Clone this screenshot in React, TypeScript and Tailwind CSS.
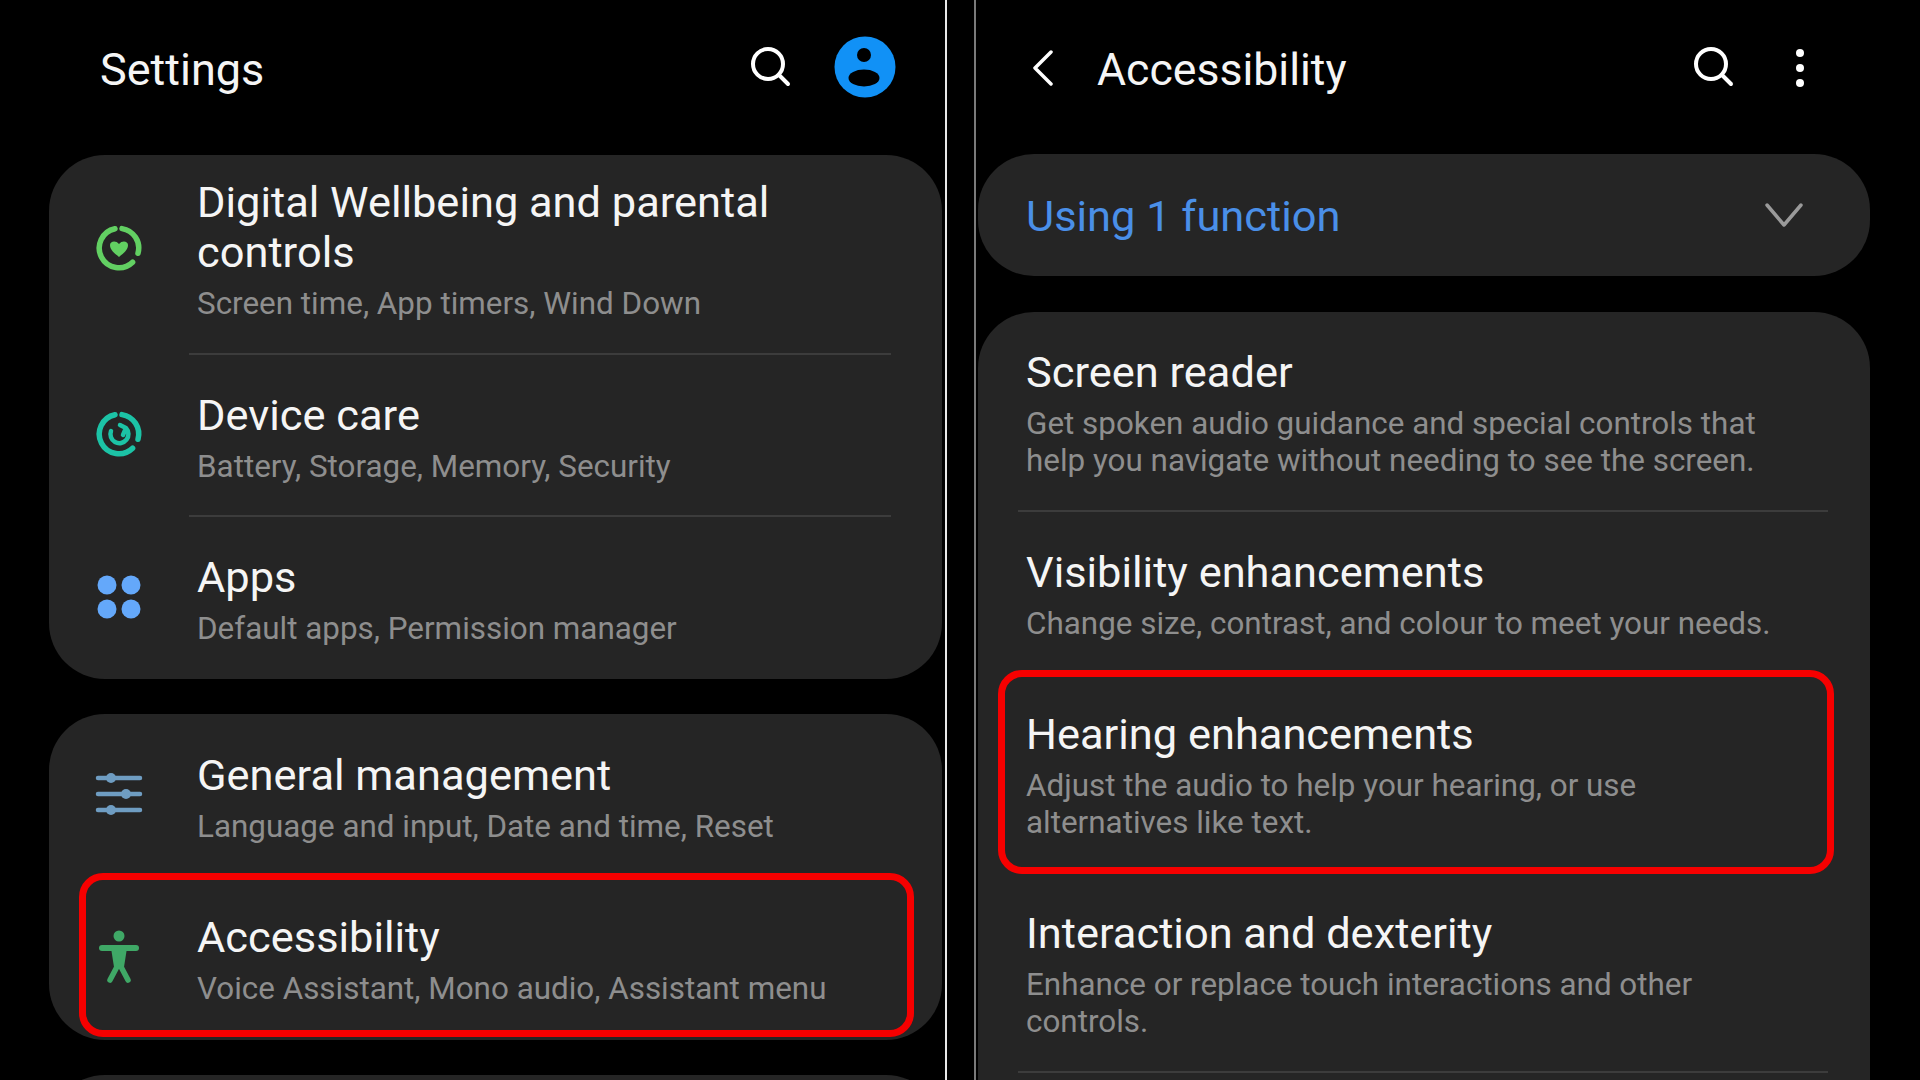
import React from "react";

function Ring({ color, children }: { color: string; children: React.ReactNode }) {
  return (
    <svg width="50" height="50" viewBox="-25 -25 50 50" fill="none">
      <g stroke={color} strokeWidth="5.5" strokeLinecap="round">
        <path d="M -4 -19.3 A 19.7 19.7 0 1 0 13.6 14.2" />
        <path d="M 3 -19.4 A 19.7 19.7 0 0 1 19 5.3" />
      </g>
      {children}
    </svg>
  );
}

function SearchIcon() {
  return (
    <svg width="42" height="42" viewBox="0 0 42 42" fill="none" stroke="#fff" strokeWidth="4" strokeLinecap="round">
      <circle cx="18" cy="18" r="15" />
      <path d="M29 29 L38 38" />
    </svg>
  );
}

function Avatar() {
  return (
    <svg width="62" height="62" viewBox="0 0 62 62">
      <circle cx="31" cy="31" r="30.5" fill="#1191f6" />
      <circle cx="30" cy="19" r="7" fill="#000" />
      <ellipse cx="30" cy="42" rx="15.5" ry="8.5" fill="#000" />
    </svg>
  );
}

const icons: Record<string, React.ReactNode> = {
  wellbeing: (
    <Ring color="#62d062">
      <path d="M0 9 C-3 6 -9 3 -9 -3 C-9 -7 -3 -8 0 -4 C3 -8 9 -7 9 -3 C9 3 3 6 0 9 Z" fill="#62d062" />
    </Ring>
  ),
  care: (
    <Ring color="#1cc3a6">
      <path d="M-8 -3 A 9 9 0 1 0 7 -6 L1 -9 M7 -6 L4 1" stroke="#1cc3a6" strokeWidth="4.5" strokeLinecap="round" fill="none" />
    </Ring>
  ),
  apps: (
    <svg width="50" height="50" viewBox="0 0 50 50" fill="#64a8fa">
      <circle cx="13" cy="13" r="9.5" />
      <circle cx="37" cy="13" r="9.5" />
      <circle cx="13" cy="37" r="9.5" />
      <circle cx="37" cy="37" r="9.5" />
    </svg>
  ),
  general: (
    <svg width="50" height="50" viewBox="0 0 50 50" fill="#6f9dc2" stroke="#6f9dc2">
      <path d="M4 9 H46 M4 25 H46 M4 41 H46" strokeWidth="4.5" strokeLinecap="round" />
      <circle cx="17" cy="9" r="5" stroke="none" />
      <circle cx="32" cy="25" r="5" stroke="none" />
      <circle cx="17" cy="41" r="5" stroke="none" />
    </svg>
  ),
  access: (
    <svg width="50" height="56" viewBox="0 0 50 56" fill="none">
      <circle cx="25" cy="7" r="5.5" fill="#3fa866" />
      <path d="M8 19 H42" stroke="#3fa866" strokeWidth="6" strokeLinecap="round" />
      <path d="M25 34 L16 51 M25 34 L34 51" stroke="#3fa866" strokeWidth="5.5" strokeLinecap="round" />
      <path d="M17 19 H33 L30 38 H20 Z" fill="#3fa866" />
    </svg>
  ),
};

function Row({
  icon,
  title,
  sub,
  divider,
  pad,
  highlight,
}: {
  icon?: string;
  title: string[];
  sub: string[];
  divider?: boolean;
  pad: string;
  highlight?: string;
}) {
  return (
    <div className={`relative flex ${pad}`}>
      {icon && <div className="w-[148px] shrink-0 flex items-center justify-center pr-[9px]">{icons[icon]}</div>}
      <div className={icon ? "" : "pl-[48px]"}>
        {title.map((t) => (
          <div key={t} className="text-[43.4px] leading-[50px] text-[#f5f5f5] whitespace-nowrap">
            {t}
          </div>
        ))}
        <div className="mt-[7px]">
          {sub.map((s) => (
            <div key={s} className="text-[31.4px] leading-[37px] text-[#8e8e8e] whitespace-nowrap">
              {s}
            </div>
          ))}
        </div>
      </div>
      {divider && (
        <div className={`absolute bottom-0 h-[2px] bg-[#3c3c3c] ${icon ? "left-[140px] right-[51px]" : "left-[40px] right-[42px]"}`} />
      )}
      {highlight && <div className={`absolute border-[7px] border-[#f60000] rounded-[24px] ${highlight}`} />}
    </div>
  );
}

export default function App() {
  return (
    <div className="flex h-screen w-full overflow-hidden bg-black [font-family:Roboto,sans-serif]">
      <div className="w-[945px] shrink-0 pl-[49px] pr-[3px]">
        <div className="h-[155px] flex items-start">
          <div className="pl-[51px] pt-[45px] text-[45px] leading-[50px] text-[#f5f5f5] grow">Settings</div>
          <div className="pt-[46px] mr-[42px]"><SearchIcon /></div>
          <div className="pt-[36px] mr-[46px]"><Avatar /></div>
        </div>
        <div className="rounded-[56px] bg-[#252525] mb-[35px]">
          <Row icon="wellbeing" title={["Digital Wellbeing and parental", "controls"]} sub={["Screen time, App timers, Wind Down"]} divider pad="pt-[23px] pb-[38px] h-[200px]" />
          <Row icon="care" title={["Device care"]} sub={["Battery, Storage, Memory, Security"]} divider pad="pt-[36px] pb-[40px] h-[162px]" />
          <Row icon="apps" title={["Apps"]} sub={["Default apps, Permission manager"]} pad="pt-[36px] pb-[38px] h-[162px]" />
        </div>
        <div className="rounded-[56px] bg-[#252525] mb-[35px]">
          <Row icon="general" title={["General management"]} sub={["Language and input, Date and time, Reset"]} pad="pt-[37px] pb-[39px] h-[162px]" />
          <Row icon="access" title={["Accessibility"]} sub={["Voice Assistant, Mono audio, Assistant menu"]} pad="pt-[37px] pb-[39px] h-[164px]" highlight="left-[30px] right-[28px] top-[-3px] bottom-[3px]" />
        </div>
        <div className="rounded-t-[56px] bg-[#252525] h-[100px]" />
      </div>
      <div className="w-[2px] shrink-0 bg-[#e8e8e8]" />
      <div className="w-[27px] shrink-0" />
      <div className="w-[2px] shrink-0 bg-[#7a7a7a]" />
      <div className="w-[892px] shrink-0 ml-[2px]">
        <div className="h-[154px] flex items-start">
          <div className="pl-[51px] pt-[50px] w-[119px] shrink-0">
            <svg width="28" height="36" viewBox="0 0 28 36" fill="none" stroke="#fff" strokeWidth="3.5" strokeLinecap="round" strokeLinejoin="round">
              <path d="M22 2 L6 18 L22 34" />
            </svg>
          </div>
          <div className="pt-[45px] text-[44.6px] leading-[50px] text-[#f5f5f5] grow">Accessibility</div>
          <div className="pt-[46px] mr-[60px]"><SearchIcon /></div>
          <div className="pt-[48px] mr-[65px]">
            <svg width="10" height="40" viewBox="0 0 10 40" fill="#fff">
              <circle cx="5" cy="5" r="4" />
              <circle cx="5" cy="20" r="4" />
              <circle cx="5" cy="35" r="4" />
            </svg>
          </div>
        </div>
        <div className="h-[122px] rounded-[56px] bg-[#252525] flex items-center justify-between pl-[48px] pr-[67px] mb-[36px]">
          <span className="text-[43.4px] leading-[50px] pt-[4px] text-[#4a8fe8]">Using 1 function</span>
          <svg width="38" height="24" viewBox="0 0 38 24" fill="none" stroke="#9a9a9a" strokeWidth="3.5" strokeLinecap="round" strokeLinejoin="round">
            <path d="M2 2 L19 22 L36 2" />
          </svg>
        </div>
        <div className="rounded-t-[56px] bg-[#252525]">
          <Row title={["Screen reader"]} sub={["Get spoken audio guidance and special controls that", "help you navigate without needing to see the screen."]} divider pad="pt-[36px] h-[200px]" />
          <Row title={["Visibility enhancements"]} sub={["Change size, contrast, and colour to meet your needs."]} pad="pt-[36px] h-[162px]" />
          <Row title={["Hearing enhancements"]} sub={["Adjust the audio to help your hearing, or use", "alternatives like text."]} pad="pt-[36px] h-[199px]" highlight="left-[20px] right-[36px] top-[-4px] bottom-[-1px]" />
          <Row title={["Interaction and dexterity"]} sub={["Enhance or replace touch interactions and other", "controls."]} divider pad="pt-[36px] h-[200px]" />
          <div className="h-[20px]" />
        </div>
      </div>
    </div>
  );
}
